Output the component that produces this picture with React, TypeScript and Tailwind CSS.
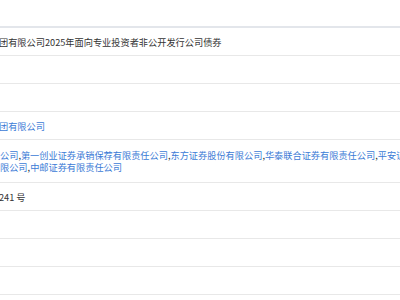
const font = { fontFamily: '"Noto Sans CJK SC", "Microsoft YaHei", sans-serif' };

function Row({ children, tall = false }: { children?: React.ReactNode; tall?: boolean }) {
  return (
    <div
      className={`flex flex-col justify-center border-b border-[#e8e8e8] whitespace-nowrap ${tall ? 'h-[43px]' : 'h-[28px]'}`}
    >
      {children}
    </div>
  );
}

export default function App() {
  return (
    <div className="w-[400px] h-[300px] overflow-hidden bg-white text-[9.2px] leading-[12px] text-[#333]" style={font}>
      <div className="h-[26px]" />
      <div className="border-t-2 border-[#e3e6eb]">
        <Row>
          <span className="-ml-[1px]">团有限公司2025年面向专业投资者非公开发行公司债券</span>
        </Row>
        <Row />
        <Row />
        <Row>
          <span className="-ml-[1px] text-[#3b7bd6]">团有限公司</span>
        </Row>
        <Row tall>
          <span className="text-[#3b7bd6]">
            公司<span className="text-[#333]">,</span>第一创业证券承销保荐有限责任公司<span className="text-[#333]">,</span>东方证券股份有限公司<span className="text-[#333]">,</span>华泰联合证券有限责任公司<span className="text-[#333]">,</span>平安证券有限责任公司
          </span>
          <span className="text-[#3b7bd6]">
            限公司<span className="text-[#333]">,</span>中邮证券有限责任公司
          </span>
        </Row>
        <Row>
          <span className="-ml-[1px]">241 号</span>
        </Row>
        <Row />
        <Row />
        <Row />
      </div>
    </div>
  );
}
